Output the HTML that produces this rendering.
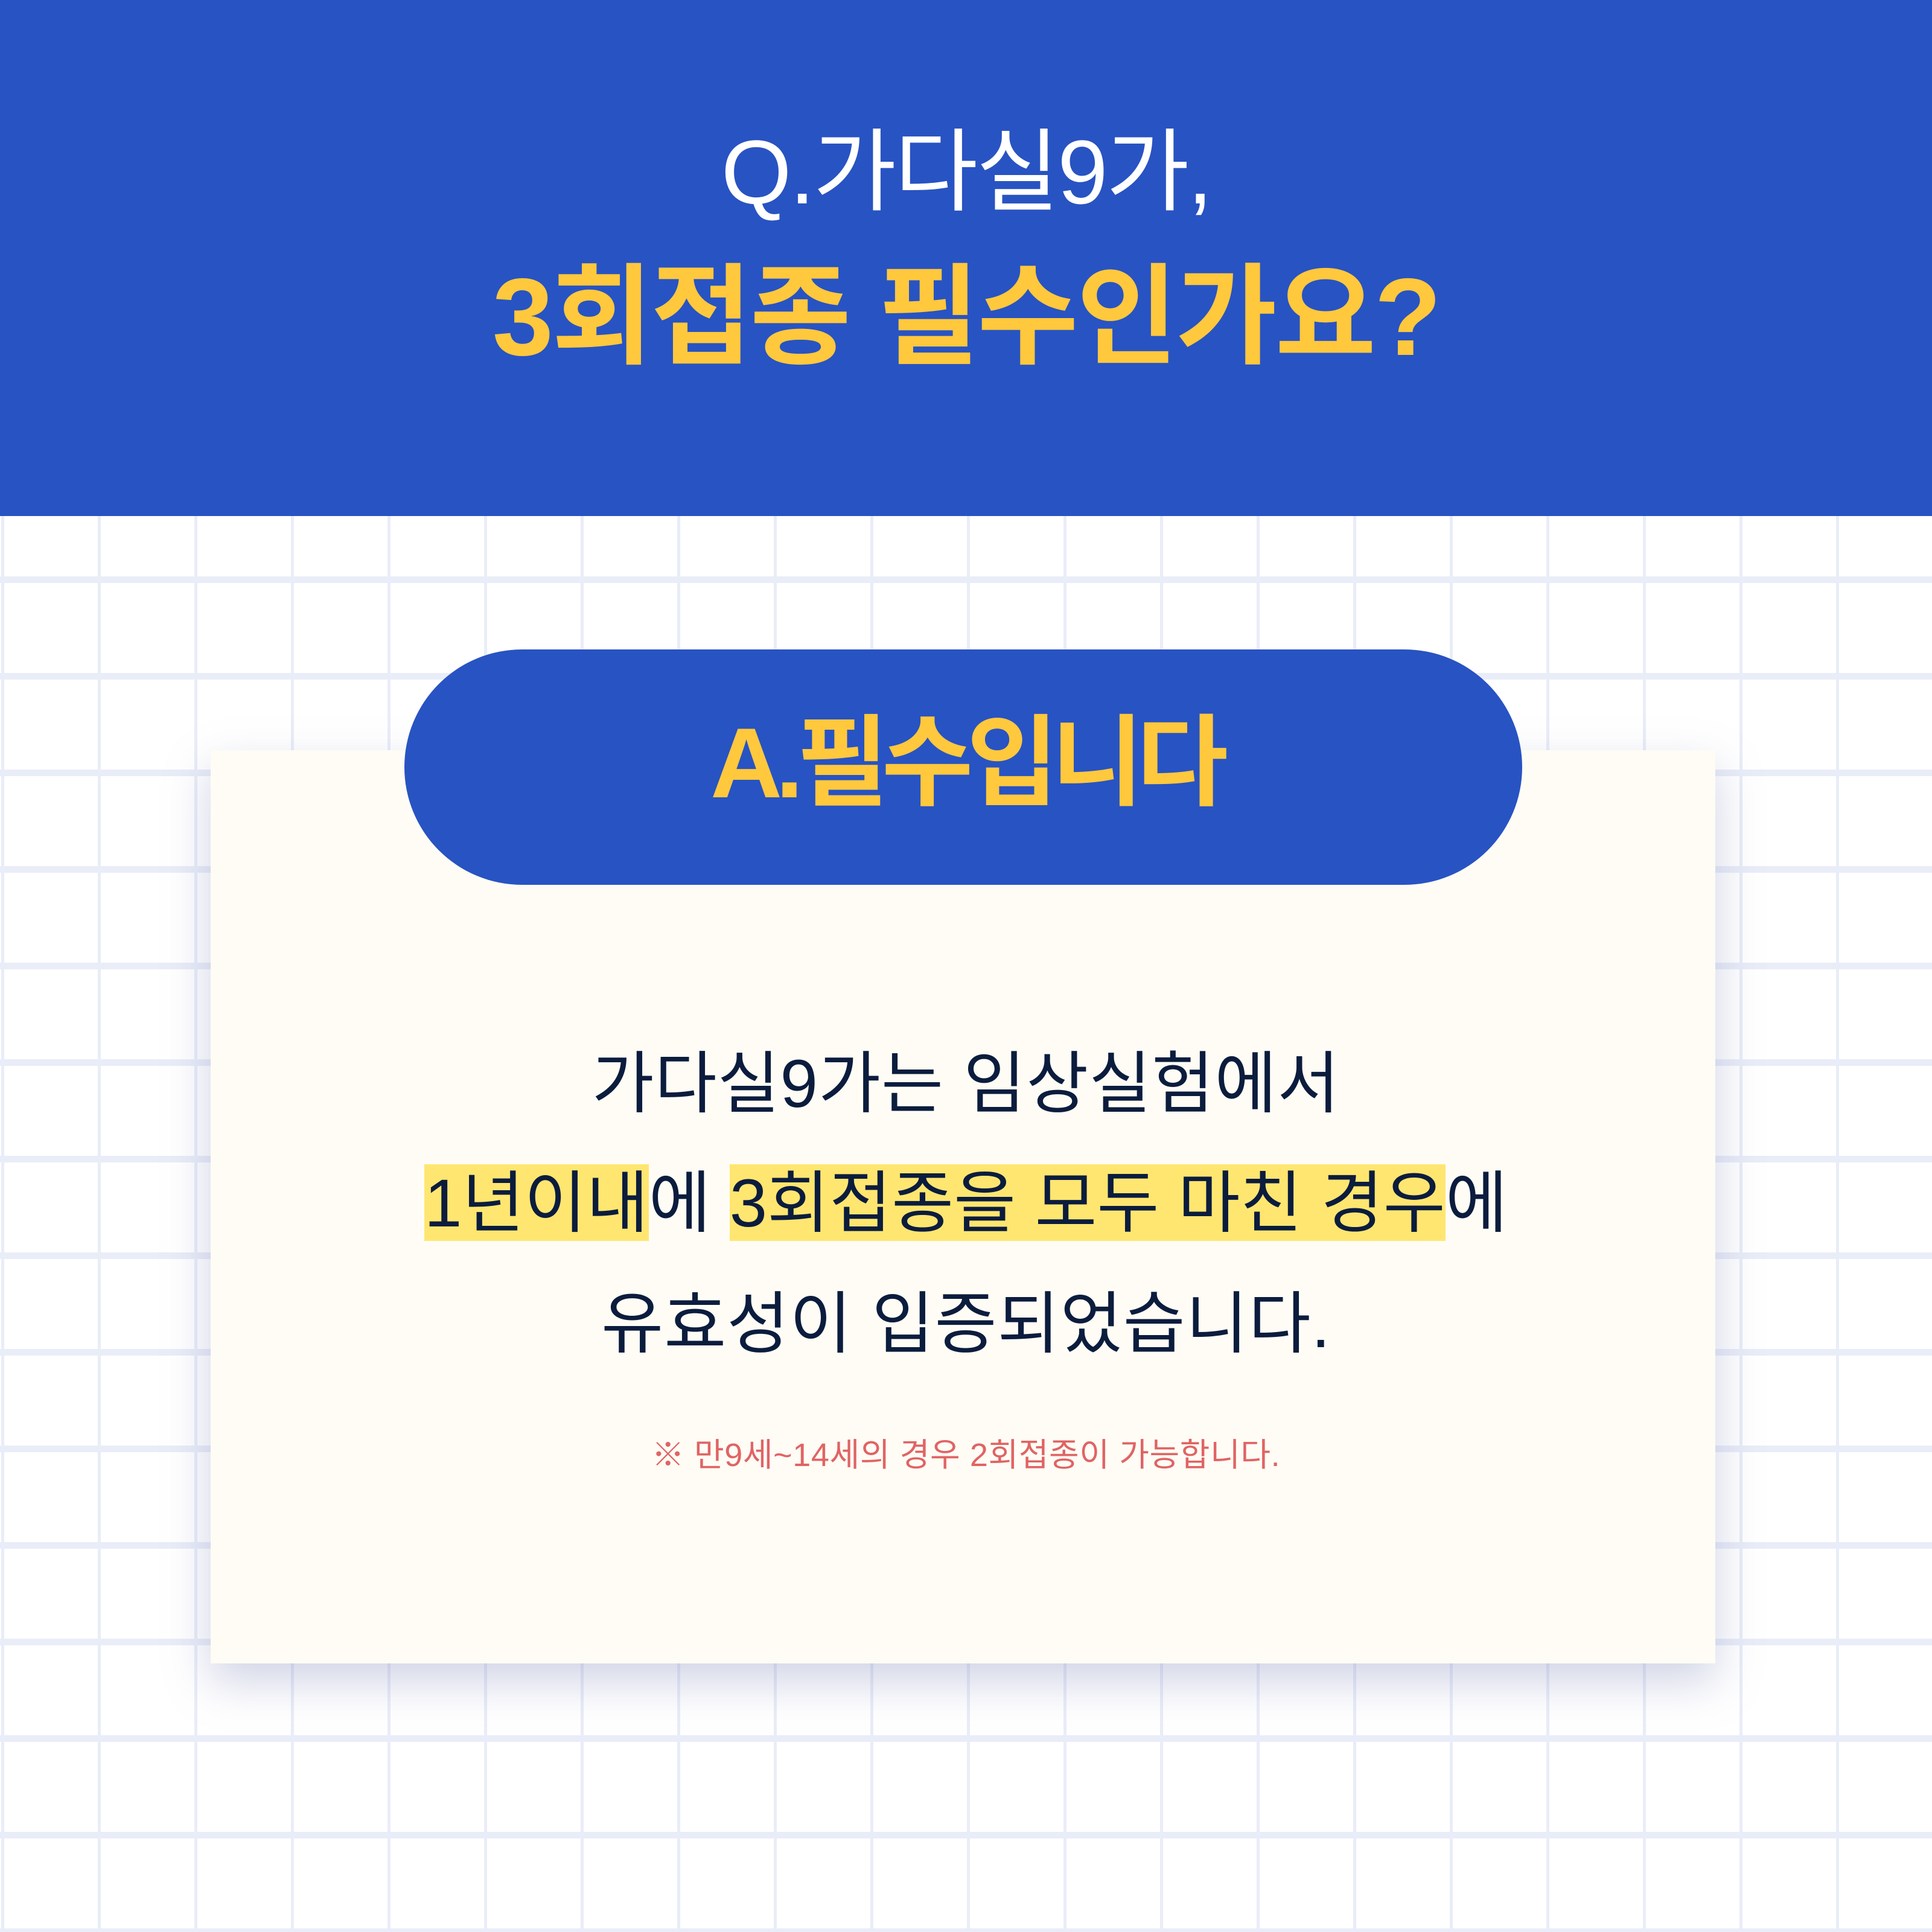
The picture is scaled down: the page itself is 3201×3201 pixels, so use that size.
<!DOCTYPE html>
<html><head><meta charset="utf-8"><style>
html,body{margin:0;padding:0}
body{width:3201px;height:3201px;position:relative;overflow:hidden;background:#fff;font-family:"Liberation Sans","Noto Sans CJK KR",sans-serif}
.grid{position:absolute;left:0;top:855px;width:3201px;height:2346px;
background-image:linear-gradient(to right,transparent 155px,#E9EDF8 155px,#E9EDF8 166px,transparent 166px),
linear-gradient(to bottom,transparent 100px,#E9EDF8 100px,#E9EDF8 111px,transparent 111px);
background-size:160px 160px;background-position:7px 0,0 0}
.head{position:absolute;left:0;top:0;width:3201px;height:855px;background:#2853C2}
.t{position:absolute;left:0;width:3201px;text-align:center;white-space:nowrap;line-height:1}
.card{position:absolute;left:349px;top:1243px;width:2493px;height:1513px;background:#FEFCF5;box-shadow:0 30px 70px rgba(120,130,180,.35)}
.pill{position:absolute;left:670px;top:1076px;width:1852px;height:390px;border-radius:195px;background:#2853C2}
.hl{background:#FFE670;padding:2px 0 0}
</style></head><body>
<div class="head"></div>
<div class="t" style="top:210px;font-size:150px;color:#fff;letter-spacing:-3px">Q.가다실9가,</div>
<div class="t" style="top:434px;font-size:182px;font-weight:bold;color:#FFC83D;letter-spacing:-3px">3회접종 필수인가요?</div>
<div class="grid"></div>
<div class="card"></div>
<div class="pill"></div>
<div class="t" style="top:1182px;font-size:165px;font-weight:bold;color:#FFC83D;letter-spacing:-11px">A.필수입니다</div>
<div class="t" style="top:1740px;font-size:112px;color:#0B1C3D;letter-spacing:1px">가다실9가는 임상실험에서</div>
<div class="t" style="top:1938px;font-size:112px;color:#0B1C3D;letter-spacing:0px"><span class="hl">1년이내</span>에 <span class="hl">3회접종을 모두 마친 경우</span>에</div>
<div class="t" style="top:2138px;font-size:112px;color:#0B1C3D;letter-spacing:1px">유효성이 입증되었습니다.</div>
<div class="t" style="top:2384px;font-size:54px;color:#E06464;letter-spacing:0.6px">※ 만9세~14세의 경우 2회접종이 가능합니다.</div>
</body></html>
